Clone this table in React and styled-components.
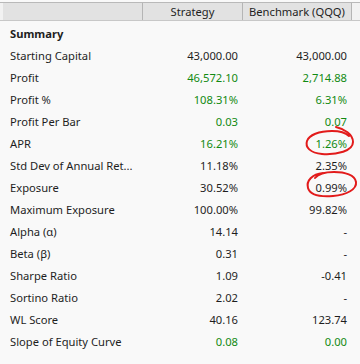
import React from 'react';
import styled, { createGlobalStyle } from 'styled-components';

const GlobalStyle = createGlobalStyle`
    html, body {
        margin: 0;
        padding: 0;
        background: #f9f9f9;
    }
    body {
        font-family: "Noto Sans", "Open Sans", sans-serif;
        font-size: 11.2px;
        color: #1e1e1e;
    }
`;

const Panel = styled.div`
    position: relative;
    width: 360px;
    height: 364px;
    padding-top: 2px;
    box-sizing: border-box;
    background: #f9f9f9;
    overflow: hidden;
`;

const HeaderBar = styled.div`
    display: grid;
    grid-template-columns: 3px 140px 100px 109px 1fr;
    height: 17px;
    border-top: 1px solid #b9b9b9;
    border-bottom: 1px solid #c8c8c8;
    background: #f2f2f2;
`;

const HeaderCell = styled.div`
    display: flex;
    align-items: center;
    justify-content: center;
    background: ${p => (p.$blank ? '#f2f2f2' : '#e2e2e2')};
    border-right: ${p => (p.$divider ? '1px solid #b5b5b5' : 'none')};
    line-height: 17px;
    white-space: nowrap;
`;

const Body = styled.div`
    display: flex;
    flex-direction: column;
    padding-top: 1px;
`;

const Row = styled.div`
    display: grid;
    grid-template-columns: 143px 100px 109px;
    height: 22px;
    align-items: center;
`;

const Label = styled.div`
    padding-left: 10px;
    font-weight: ${p => (p.$bold ? 700 : 400)};
    white-space: nowrap;
`;

const Value = styled.div`
    text-align: right;
    padding-right: 5px;
    color: ${p => (p.$green ? '#118a11' : '#1e1e1e')};
    white-space: nowrap;
`;

const Marks = styled.svg`
    position: absolute;
    left: 0;
    top: 0;
    pointer-events: none;
`;

const rows = [
    { label: 'Summary', bold: true },
    { label: 'Starting Capital', s: '43,000.00', b: '43,000.00' },
    { label: 'Profit', s: '46,572.10', b: '2,714.88', green: true },
    { label: 'Profit %', s: '108.31%', b: '6.31%', green: true },
    { label: 'Profit Per Bar', s: '0.03', b: '0.07', green: true },
    { label: 'APR', s: '16.21%', b: '1.26%', green: true },
    { label: 'Std Dev of Annual Ret...', s: '11.18%', b: '2.35%' },
    { label: 'Exposure', s: '30.52%', b: '0.99%' },
    { label: 'Maximum Exposure', s: '100.00%', b: '99.82%' },
    { label: 'Alpha (\u03b1)', s: '14.14', b: '-' },
    { label: 'Beta (\u03b2)', s: '0.31', b: '-' },
    { label: 'Sharpe Ratio', s: '1.09', b: '-0.41' },
    { label: 'Sortino Ratio', s: '2.02', b: '-' },
    { label: 'WL Score', s: '40.16', b: '123.74' },
    { label: 'Slope of Equity Curve', s: '0.08', b: '0.00', green: true },
];

const App = () => {
    return (
        <>
            <GlobalStyle />
            <Panel>
                <HeaderBar>
                    <HeaderCell $blank />
                    <HeaderCell $divider />
                    <HeaderCell $divider>Strategy</HeaderCell>
                    <HeaderCell $divider>Benchmark (QQQ)</HeaderCell>
                    <HeaderCell $blank />
                </HeaderBar>
                <Body>
                    {rows.map((r) => (
                        <Row key={r.label}>
                            <Label $bold={r.bold}>{r.label}</Label>
                            <Value $green={r.green}>{r.s}</Value>
                            <Value $green={r.green}>{r.b}</Value>
                        </Row>
                    ))}
                </Body>
                <Marks width="360" height="364" viewBox="0 0 360 364">
                    <path
                        d="M336 127 C 344 129, 353 134, 353 142 C 353 151, 337 155, 322 154 C 310 153, 305 147, 307 141 C 309 135, 319 131, 332 131 C 340 131, 346 133, 349 136"
                        fill="none" stroke="#e21b1b" strokeWidth="2" strokeLinecap="round" />
                    <path
                        d="M323 173 C 312 174, 306 181, 308 188 C 310 195, 320 197, 333 196 C 347 195, 357 189, 356 182 C 355 175, 345 172, 334 172 C 325 172, 318 174, 315 178"
                        fill="none" stroke="#e21b1b" strokeWidth="2" strokeLinecap="round" />
                </Marks>
            </Panel>
        </>
    );
};

export default App;
